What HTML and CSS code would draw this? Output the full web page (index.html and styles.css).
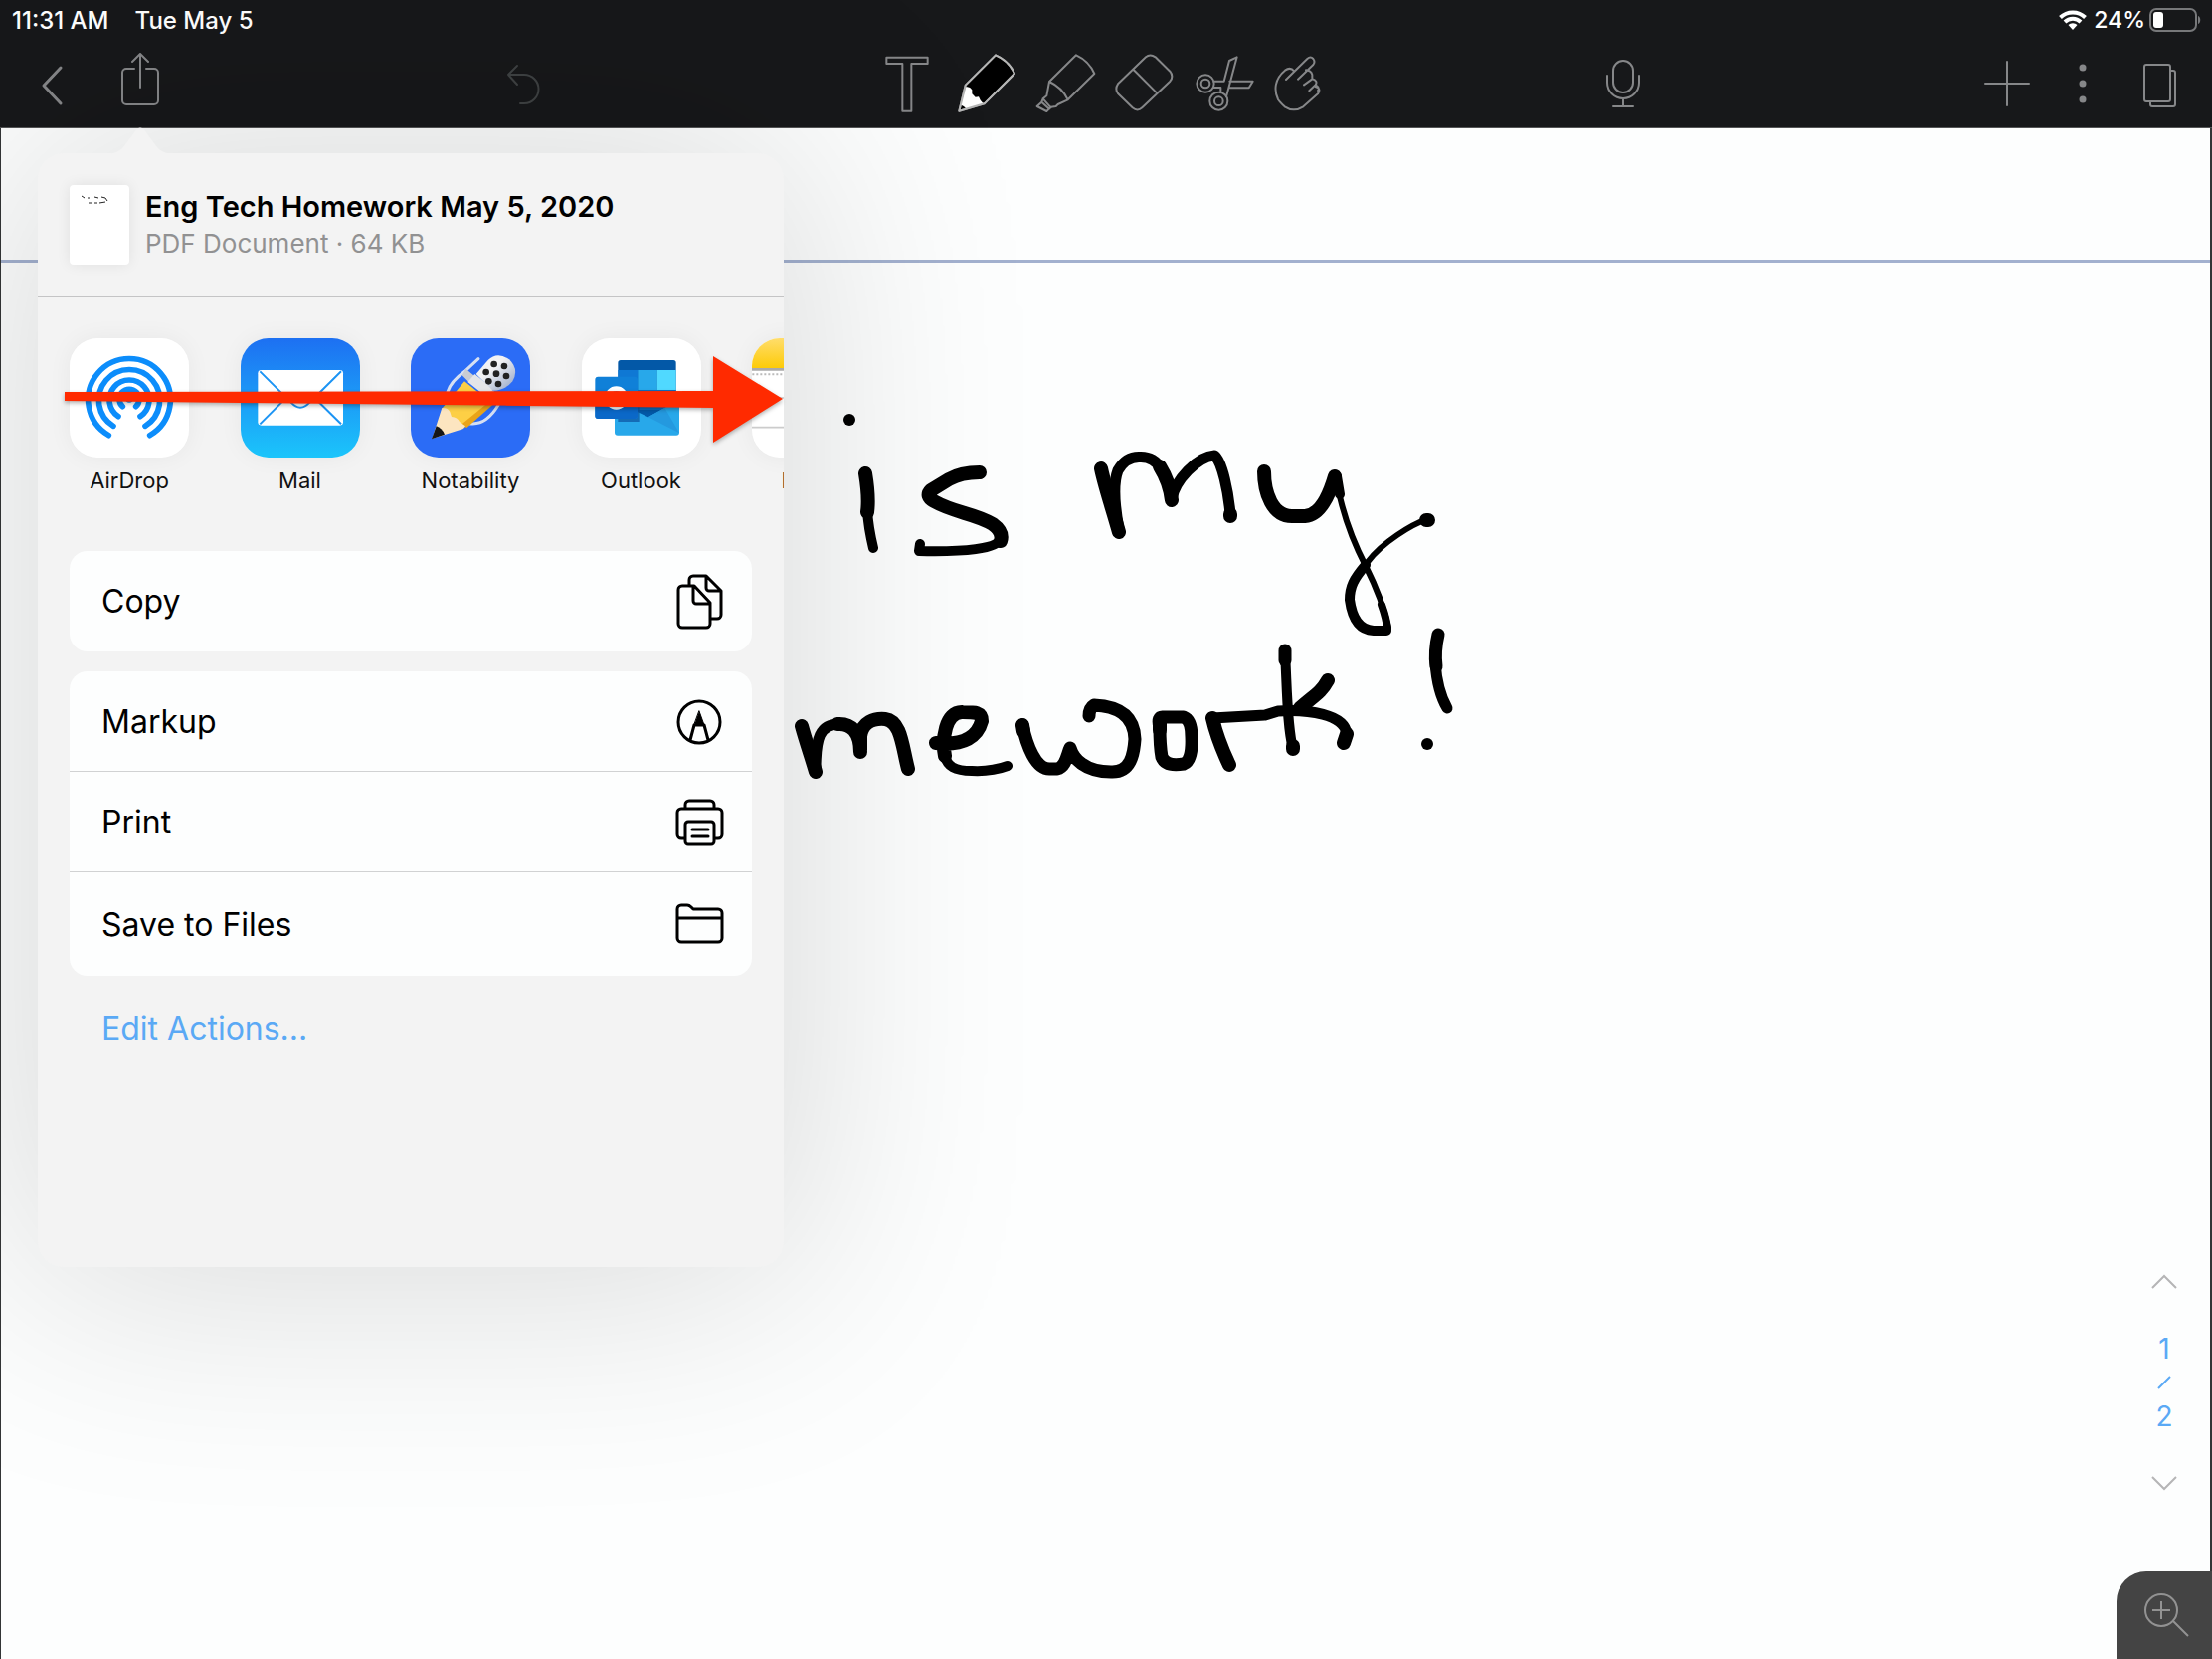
FILE: index.html
```html
<!DOCTYPE html>
<html lang="en">
<head>
<meta charset="utf-8">
<meta name="viewport" content="width=device-width, initial-scale=1">
<title>Eng Tech Homework May 5, 2020</title>
<link rel="stylesheet" href="styles.css">
</head>
<body>
<header class="topbar">
  <div class="status">
    <span class="clock">11:31 AM</span>
    <span class="clock">Tue May 5</span>
    <div class="status-right">
      <svg class="wifi" viewBox="0 0 28 20" aria-label="Wi-Fi"><path d="M1.500 7.500a18 18 0 0 1 25 0M6 12a11.500 11.500 0 0 1 16 0" fill="none" stroke="#fff" stroke-width="4"/><path d="M14 20l-4.500-5a6.500 6.500 0 0 1 9 0z" fill="#fff"/></svg>
      <span>24%</span>
      <svg class="battery" viewBox="0 0 54 26" aria-label="Battery"><rect x="2" y="2" width="46" height="22" rx="6" fill="none" stroke="#77787a" stroke-width="2"/><rect x="5" y="5" width="10" height="16" rx="3" fill="#fff"/><path d="M50 9c3 1 3 7 0 8z" fill="#77787a"/></svg>
    </div>
  </div>
  <nav class="toolbar" aria-label="Note tools">
    <div class="side side-left">
      <button class="tool" aria-label="Back"><svg viewBox="0 0 80 60"><path d="M49 15L32 33l17 18" stroke-width="3"/></svg></button>
      <button class="tool" aria-label="Share"><svg viewBox="0 0 80 60"><path d="M35 16h-8a4 4 0 0 0-4 4v28a4 4 0 0 0 4 4h28a4 4 0 0 0 4-4V20a4 4 0 0 0-4-4h-8M41 35V2M33 9l8-8 8 8"/></svg></button>
      <button class="tool undo" aria-label="Undo"><svg viewBox="-1 -1 80 60"><path d="M34 12l-9 9 9 10M25 21h16a14.500 14.500 0 0 1 0 29h-4"/></svg></button>
    </div>
    <div class="tools">
      <button class="tool" aria-label="Text"><svg viewBox="37 70 240 180"><path class="w6" d="M95 84H219V103H170V246H143V103H95z"/></svg></button>
      <button class="tool" aria-label="Pencil"><svg viewBox="277 70 240 180"><path class="w6" d="M424 77Q465 95 481 133L390 224 314 246 333 168z" fill="#000"/><path d="M334 173q12-3 19 9v12l10 10 10-1 5 10 10 12-52 16q-8-12-17-13z" fill="#fff" stroke="none"/><path class="bright w6" d="M424 77Q465 95 481 133L390 224 314 246 333 168z"/></svg></button>
      <button class="tool" aria-label="Highlighter"><svg viewBox="517 70 240 180"><path class="w6" d="M667 77Q706 95 722 133L642 212Q625 175 586 157zM586 157L578 200 567 209 563 219 549 232 578 247 591 234 606 232 612 226 642 212M567 209L591 236M563 219L586 240"/></svg></button>
      <button class="tool" aria-label="Eraser"><svg viewBox="757 70 240 180"><path class="w6" d="M877 83q13-11 29 0l44 43q12 15 0 30l-84 80q-14 13-29 0l-44-43q-10-14 0-29zM840 121l70 70"/></svg></button>
      <button class="tool" aria-label="Cut"><svg viewBox="997 70 240 180"><g class="w6"><circle cx="1057" cy="163" r="26"/><circle cx="1057" cy="163" r="13"/><circle cx="1097" cy="216" r="27"/><circle cx="1097" cy="216" r="13"/><path d="M1082 156h31l16-62 23-11-32 120M1081 175h22v15M1130 156h70l-12 20h-61"/></g></svg></button>
      <button class="tool" aria-label="Hand"><svg viewBox="1237 70 240 180"><path class="w6" d="M1300 151L1364 88q10-9 18 0 7 9 0 18L1336 150M1325 126q-12-15-28-3c-32 26-34 60-21 88q5 8 20 22 27 18 56 0l44-39q11-16-6-21M1360 122q16 2 19 14v13l-25 18M1379 149q18 5 10 18l-19 18M1389 167q14 8 7 17"/></svg></button>
    </div>
    <div class="side side-right">
      <button class="tool" aria-label="Record"><svg viewBox="0 0 80 60"><rect x="30" y="8" width="20" height="32" rx="10"/><path d="M24 23v7a16 16 0 0 0 32 0v-7M40 46v8M30 54h20"/></svg></button>
      <button class="tool add" aria-label="Add"><svg viewBox="-4 0 80 60"><path d="M40 9v44M18 31h44"/></svg></button>
      <button class="tool" aria-label="More"><svg viewBox="-4 0 80 60"><g class="solid"><circle cx="38" cy="15" r="3.500"/><circle cx="38" cy="31" r="3.500"/><circle cx="38" cy="47" r="3.500"/></g></svg></button>
      <button class="tool" aria-label="Pages"><svg viewBox="2 0 80 60"><path d="M28 12h22a2 2 0 0 1 2 2v33a2 2 0 0 1-2 2H28a2 2 0 0 1-2-2V14a2 2 0 0 1 2-2zM52 18h3a2 2 0 0 1 2 2v32a2 2 0 0 1-2 2H34a2 2 0 0 1-2-2v-3"/></svg></button>
    </div>
  </nav>
</header>

<main class="page">
  <div class="rule"></div>
  <svg class="ink" viewBox="0 0 720 400" role="img" aria-label="Handwritten note">
    <circle cx="74" cy="22" r="6"/><circle cx="655" cy="348" r="6"/>
    <path class="n13" d="M90 76Q94 100 92 115M205 75Q186 75 174 82L156 93Q150 99 159 104C180 116 200 116 218 127Q229 135 226 144"/>
    <path class="n10" d="M92 113Q93 130 98 151M226 142C222 152 190 155 144 154L145 147M205 76v1"/>
    <path class="n13" d="M327 71C331 90 338 110 345 135M398 103Q396 85 386 69M457 119v-2M491 74C491 95 499 119 519 119H532C548 118 557 96 562 79"/>
    <path class="n11" d="M345 132C340 105 339 86 344 73Q352 59 366 59.500Q380 59 387 71M398 102C401 83 424 59 441 58C449 64 455 95 457 117"/>
    <path class="n10" d="M564 79L567 97M593 168C581 182 577 190 577 203Q581 233 601 234H614"/>
    <path class="n6" d="M565 90C571 120 579 142 593 169Q610 203 616 231M595 165C610 145 640 127 655 122"/>
    <path class="n8" d="M609 208Q614 222 615 232"/>
    <path class="n13" d="M654 123h2M26 330C30 345 37 365 40 376M85 356C85 336 76 327 62 328M85 354V340C87 326 99 322 110 323C126 325 127 350 133 373"/>
    <path class="n11" d="M40 374C40 342 44 328 64 328"/>
    <path class="n13" d="M161 347C190 350 203 340 207 325C207 316 200 316 188 316C170 315 167 344 170 360"/>
    <path class="n10" d="M169 356C171 372 182 375 197 375Q217 376 233 370"/>
    <path class="n12" d="M248 329C252 348 261 374 276 373H283C292 371 293 358 296 352C299 362 310 376 337 376C357 377 360 358 361 343C360 318 342 310 320 309Q315 312 315 320M386 331Q383 320 390 321H410Q418 324 418 341Q419 365 410 368Q392 371 388 361Q386 350 386 331"/>
    <path class="n13" d="M248 329l1 6M386 325v9M456 369C447 350 442 335 439 322M520 353V350M555 284C548 297 540 300 527 312M571 347L574 338"/>
    <path class="n11" d="M439 322L492 319 505 315C535 313 572 318 574 338M512 255V262"/>
    <path class="n12" d="M512 254V264"/>
    <path class="n10" d="M512 256C514 290 514 330 520 353"/>
    <path class="n12" d="M666 238Q662 255 664 270"/>
    <path class="n11" d="M663 266Q665 295 675 312"/>
  </svg>

  <aside class="pager" aria-label="Pages">
    <button aria-label="Previous page"><svg viewBox="0 0 26 16"><path d="M1 14L13 2l12 12"/></svg></button>
    <div class="pages"><span>1</span><svg viewBox="0 0 14 14"><path d="M1 13L13 1"/></svg><span>2</span></div>
    <button aria-label="Next page"><svg viewBox="0 0 26 16"><path d="M1 2l12 12L25 2"/></svg></button>
  </aside>
  <button class="zoom" aria-label="Zoom in"><svg viewBox="0 0 96 88"><circle cx="45" cy="39" r="16"/><path d="M45 30v18M36 39h18M57 50l15 15"/></svg></button>

  <section class="popover" aria-label="Share sheet">
    <svg class="notch" viewBox="0 0 64 26"><path d="M0 26C14 25 14 20 28 2Q32-2 36 2C50 20 50 25 64 26z"/></svg>
    <header class="doc">
      <svg class="thumb" viewBox="0 0 60 80"><path d="M12 11l3 2m3 0h2m5-1l4 1m3-1l4 1 2 3M19 18h4m2 0h3m2 0l6-1" fill="none" stroke="#222" stroke-width="1"/></svg>
      <div>
        <h1>Eng Tech Homework May 5, 2020</h1>
        <p>PDF Document · 64 KB</p>
      </div>
    </header>
    <div class="apps">
      <div class="strip">
      <button class="app"><svg viewBox="60 60 360 360"><rect x="60" y="60" width="360" height="360" fill="#fff"/><g fill="none" stroke="#0c8dfb" stroke-width="17" stroke-linecap="round"><path d="M178 353A124 124 0 1 1 302 353"/><path d="M192 325A92 92 0 1 1 288 325"/><path d="M207 296A60 60 0 1 1 273 296"/><path d="M220 266A30 30 0 1 1 260 266"/></g><circle cx="240" cy="242" r="12" fill="#0c8dfb"/></svg><span>AirDrop</span></button>
      <button class="app"><svg viewBox="576 60 360 360"><defs><linearGradient id="mail" x2="0" y2="1"><stop stop-color="#1d70f2"/><stop offset="1" stop-color="#1bc5fb"/></linearGradient></defs><rect x="576" y="60" width="360" height="360" fill="url(#mail)"/><rect x="628" y="156" width="257" height="167" rx="10" fill="#fff"/><path d="M634 160L728 254Q756 284 784 254L879 160M634 319L703 250M879 319L809 250" fill="none" stroke="#1c94f4" stroke-width="6"/></svg><span>Mail</span></button>
      <button class="app"><svg viewBox="39 60 360 360"><defs><linearGradient id="mic" x2="1" y2="1"><stop offset=".4" stop-color="#f2f2f4"/><stop offset="1" stop-color="#8da0c4"/></linearGradient></defs><rect x="39" y="60" width="360" height="360" fill="#2b6cf6"/><path d="M243 122L202 160Q160 190 150 222M303 262Q265 325 216 317" fill="none" stroke="#d5dff2" stroke-width="9" stroke-linecap="round"/><path d="M201 190L278 252 198 332 133 272z" fill="#fdcf45"/><path d="M278 250L292 256 208 330 190 322z" fill="#e9a419"/><path d="M133 270Q150 268 157 282L162 297Q180 298 186 312L204 325 196 334 103 363z" fill="#fce5c0"/><path d="M116 325Q132 330 141 350L102 364z" fill="#161616"/><path d="M205 152L234 176 292 222 278 240 214 192 194 172z" fill="#c9ccd3"/><path d="M211 192L232 168 288 213 268 238z" fill="#e4e5e8"/><path d="M236 168L272 126Q300 98 336 124 367 154 346 190 325 217 287 218z" fill="url(#mic)"/><g fill="#222"><circle cx="290" cy="138" r="10"/><circle cx="321" cy="144" r="10"/><circle cx="266" cy="162" r="10"/><circle cx="297" cy="167" r="10"/><circle cx="327" cy="174" r="10"/><circle cx="274" cy="190" r="10"/><circle cx="303" cy="198" r="10"/></g></svg><span>Notability</span></button>
      <button class="app"><svg viewBox="555 60 360 360"><rect x="555" y="60" width="360" height="360" fill="#fff"/><rect x="664" y="126" width="175" height="180" rx="8" fill="#0358a7"/><path d="M664 156h60v60h-60z" fill="#0f78d4"/><path d="M724 156h58v60h-58z" fill="#28a8ea"/><path d="M782 156h57v60h-57z" fill="#50d9ff"/><path d="M664 216h175v60H664z" fill="#0f6cbd"/><path d="M654 250L755 298 849 245V344a9 9 0 0 1-9 9H663a9 9 0 0 1-9-9z" fill="#28a8ea"/><path d="M755 298l50-28 44 76z" fill="#2499df"/><path d="M664 220H728V312H664z" fill="#0b53a0" opacity=".7"/><rect x="595" y="176" width="128" height="127" rx="9" fill="#1080d8"/><path d="M595 245h128v49a9 9 0 0 1-9 9H604a9 9 0 0 1-9-9z" fill="#0b68c8"/><circle cx="659" cy="240" r="28" fill="none" stroke="#fff" stroke-width="14"/></svg><span>Outlook</span></button>
      <button class="app"><svg viewBox="1068 60 360 360"><defs><linearGradient id="notes" x2="0" y2="1"><stop stop-color="#ffdd6c"/><stop offset="1" stop-color="#fdcb08"/></linearGradient></defs><rect x="1068" y="60" width="360" height="360" fill="#fff"/><rect x="1068" y="60" width="360" height="90" fill="url(#notes)"/><path d="M1068 154h360" stroke="#aaa" stroke-width="8"/><path d="M1069 169h360" stroke="#bbb" stroke-width="6" stroke-dasharray="6 6"/><path d="M1068 240h360M1068 329h360" stroke="#ccc" stroke-width="5"/></svg><span>Notes</span></button>
      </div>
    </div>
    <div class="actions">
      <div class="card">
        <button class="row">Copy<svg viewBox="-1 0 50 58"><path d="M14 13V7a4 4 0 0 1 4-4H31L46 18V42a4 4 0 0 1-4 4H36M31 3V15a3 3 0 0 0 3 3H46M7 13H19L35 30V51a4 4 0 0 1-4 4H7a4 4 0 0 1-4-4V17a4 4 0 0 1 4-4zM18 14V28a3 3 0 0 0 3 3H35"/></svg></button>
      </div>
      <div class="card">
        <button class="row">Markup<svg viewBox="0 -1 50 58"><circle cx="25" cy="29" r="21"/><path d="M16 47l4-15h10l4 15"/><path d="M25 18l5 14H20z" fill="#000" stroke-width="1"/></svg></button>
        <button class="row">Print<svg viewBox="-1 -2 50 58"><path d="M10 14V10a4 4 0 0 1 4-4H35a4 4 0 0 1 4 4V14M9 44H6a4 4 0 0 1-4-4V18a4 4 0 0 1 4-4H43a4 4 0 0 1 4 4V40a4 4 0 0 1-4 4H40M13 27H36a3 3 0 0 1 3 3V47a3 3 0 0 1-3 3H13a3 3 0 0 1-3-3V30a3 3 0 0 1 3-3zM17 35H33M17 42H33"/></svg></button>
        <button class="row">Save to Files<svg viewBox="-1 0 50 58"><path d="M2 14a4 4 0 0 1 4-4H12Q14 10 16 12L18 14H43a4 4 0 0 1 4 4V43a4 4 0 0 1-4 4H6a4 4 0 0 1-4-4zM2 23H47"/></svg></button>
      </div>
      <a class="edit" href="#">Edit Actions...</a>
    </div>
    <svg class="pointer" viewBox="0 0 724 88"><path d="M0 36L652 35V0L722 43 652 87V52L0 45z"/></svg>
  </section>
</main>
</body>
</html>
```
FILE: styles.css
```css
* { box-sizing: border-box; }
body {
  margin: 0;
  min-height: 100vh;
  display: flex;
  flex-direction: column;
  background: #fdfefe;
  color: #000;
  font-family: Inter, "Liberation Sans", sans-serif;
  overflow: hidden;
}
button {
  margin: 0;
  padding: 0;
  border: 0;
  background: none;
  color: inherit;
  font: inherit;
  cursor: pointer;
}
svg { display: block; }

.topbar {
  background: #17181a;
  border-bottom: 1px solid #555657;
  color: #fff;
}
.status {
  display: flex;
  align-items: center;
  gap: 26px;
  height: 40px;
  padding: 0 10px 0 12px;
  font-size: 23px;
  font-weight: 500;
}
.clock { font-size: 24px; }
.status-right {
  display: flex;
  align-items: center;
  gap: 7px;
  margin-left: auto;
}
.status-right .battery { width: 54px; height: 26px; margin-left: -4px; }
.wifi { width: 28px; height: 20px; }

.toolbar {
  display: grid;
  grid-template-columns: 1fr auto 1fr;
  height: 88px;
  padding-top: 13px;
}
.side, .tools { display: flex; }
.side-left { padding-left: 12px; gap: 8px; }
.side-right { justify-content: flex-end; padding-right: 12px; }
.side-right .tool:first-child { margin-left: 240px; margin-right: auto; }
.tool { width: 80px; height: 60px; }
.tool svg {
  width: 80px;
  height: 60px;
  fill: none;
  stroke: #868789;
  stroke-width: 2;
  stroke-linejoin: round;
  stroke-linecap: round;
}
.tool .w6 { stroke-width: 6; }
.tool .bright { stroke: #b5b5b5; }
.tool .solid { fill: #868789; stroke: none; }
.undo { margin-left: 297px; }
.undo svg { stroke: #3f4243; }
.add { margin-right: -2px; }

.page {
  position: relative;
  flex: 1;
  padding-top: 132px;
  border: solid #333536;
  border-width: 0 2px 0 1px;
}
.rule { height: 3px; background: #a3b1cf; }
.ink {
  position: absolute;
  z-index: 1;
  left: 779px;
  top: 271px;
  width: 720px;
  height: 400px;
}
.ink path {
  fill: none;
  stroke: #000;
  stroke-linecap: round;
  stroke-linejoin: round;
}
.ink .n13 { stroke-width: 14px; }
.ink .n12 { stroke-width: 13px; }
.ink .n11 { stroke-width: 11px; }
.ink .n10 { stroke-width: 10px; }
.ink .n8 { stroke-width: 8px; }
.ink .n6 { stroke-width: 6px; }

.pager {
  position: absolute;
  right: 20px;
  bottom: 169px;
  display: flex;
  flex-direction: column;
  align-items: center;
  gap: 42px;
  width: 52px;
}
.pager button svg { width: 26px; height: 16px; }
.pager svg { fill: none; stroke: #b5b5b6; stroke-width: 2; }
.pages {
  display: flex;
  flex-direction: column;
  align-items: center;
  gap: 10px;
  color: #5aa9f5;
  font-size: 28px;
  line-height: 34px;
}
.pages svg { width: 14px; height: 14px; stroke: #5aa9f5; }
.zoom {
  position: absolute;
  right: -2px;
  bottom: 0;
  width: 96px;
  height: 88px;
  border-radius: 30px 0 0 0;
  background: #444;
}
.zoom svg { width: 96px; height: 88px; fill: none; stroke: #929292; stroke-width: 2; }

.popover {
  position: absolute;
  left: 37px;
  top: 25px;
  width: 750px;
  min-height: 1120px;
  border-radius: 26px;
  background: #f3f3f3;
  box-shadow: 0 0 240px 16px rgba(0, 0, 0, .15);
}
.notch {
  position: absolute;
  left: 71px;
  top: -26px;
  width: 64px;
  height: 27px;
  fill: #f3f3f3;
}
.doc {
  display: flex;
  align-items: center;
  gap: 16px;
  height: 145px;
  padding: 0 32px;
  border-bottom: 1px solid #c4c4c5;
}
.thumb {
  width: 60px;
  height: 80px;
  border-radius: 4px;
  background: #fff;
  box-shadow: 0 0 14px rgba(0, 0, 0, .08);
}
.doc div { padding-bottom: 2px; }
.doc h1 {
  margin: 0;
  font-size: 29px;
  font-weight: 600;
  line-height: 40px;
}
.doc p {
  margin: 0;
  color: #919192;
  font-size: 26px;
  line-height: 34px;
}
.apps {
  height: 255px;
  padding: 41px 0 0 32px;
  overflow: hidden;
}
.strip {
  display: flex;
  justify-content: space-between;
  width: 806px;
}
.app {
  flex: none;
  display: flex;
  flex-direction: column;
  align-items: center;
  gap: 8px;
  width: 120px;
  height: 158px;
  color: #111;
  font-size: 22px;
  line-height: 30px;
}
.app svg {
  width: 120px;
  height: 120px;
  border-radius: 28px;
  box-shadow: 0 0 24px rgba(0, 0, 0, .05);
}
.actions {
  display: flex;
  flex-direction: column;
  gap: 20px;
  padding: 0 32px;
}
.card { border-radius: 18px; background: #fdfefe; }
.row {
  display: flex;
  align-items: center;
  justify-content: space-between;
  width: 100%;
  height: 101px;
  padding: 0 28px 0 32px;
  font-size: 32px;
}
.row + .row { border-top: 1px solid #d1d2d3; }
.row:first-child:not(:last-child) { height: 100px; }
.row:last-child:not(:first-child) { height: 105px; }
.row svg {
  width: 50px;
  height: 58px;
  fill: none;
  stroke: #000;
  stroke-width: 3;
  stroke-linejoin: round;
  stroke-linecap: round;
}
.edit {
  padding: 14px 32px;
  color: #5aa9f5;
  font-size: 32px;
  line-height: 40px;
  text-decoration: none;
}
.pointer {
  position: absolute;
  left: 27px;
  top: 204px;
  width: 724px;
  height: 88px;
  fill: #ff2a00;
  filter: drop-shadow(0 2px 2px rgba(0, 0, 0, .3));
}
```
